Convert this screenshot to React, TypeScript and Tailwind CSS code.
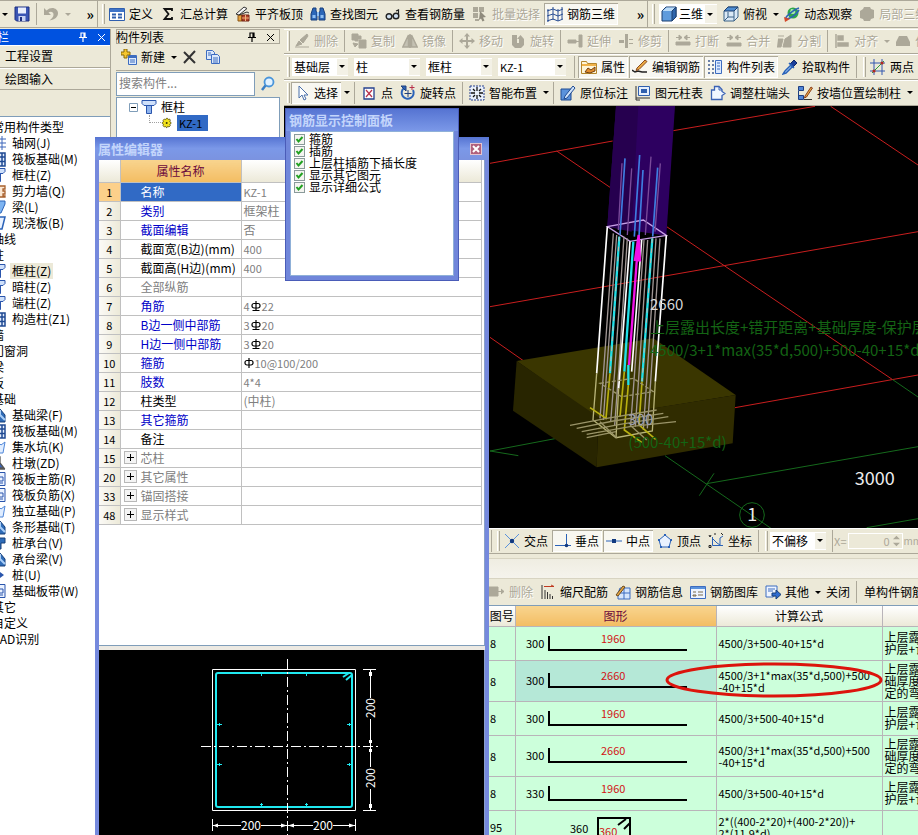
import React, { useState } from 'react';
import clsx from 'clsx';

// 16x16 icon drawings
const icons: Record<string, React.ReactNode> = {
  save: (
    <>
      <path d="M1 1h14v14H2.500L1 13.500z" fill="#3a55b4" stroke="#1d2f80" />
      <path d="M4 1.500h8v6H4z" fill="#e9eefc" />
      <path d="M4.500 10h7v5h-7z" fill="#c9d3f2" />
      <path d="M6 11h2v4H6z" fill="#1d2f80" />
    </>
  ),
  undo: <path d="M1 2v7h7L5.500 6.500c2-1.500 5-1 5 2 0 2-1 3.500-4 6C12 13.500 15 11 15 7 15 2.500 8.500-.5 3.500 4.500z" fill="#aca899" />,
  define: (
    <>
      <path d="M.5 2.500h15v12H.5z" fill="#fff" stroke="#2f5fae" />
      <path d="M1 3h14v3H1z" fill="#3f74c8" />
      <path d="M3 8.500h4M3 11.500h4M9 8.500h4M9 11.500h4" stroke="#2f5fae" strokeWidth="2" />
    </>
  ),
  sigma: <path d="M12 5V3H4.500l4 5-4 5H12v-2" fill="none" stroke="#111" strokeWidth="1.800" />,
  slab: (
    <>
      <path d="M3 9h4v6H3z" fill="#e8a33a" stroke="#8a5514" />
      <path d="M7 9h7v6H7z" fill="#b6442c" stroke="#6e2312" />
      <path d="M7 12h7M10.500 9v6" stroke="#f1b37c" />
      <path d="M1 8l8-7 3 1.500L4 9z" fill="#f7f7f7" stroke="#333" />
      <path d="M4 9l8-3 2 1" fill="none" stroke="#333" />
    </>
  ),
  find: (
    <>
      <path d="M3 2h3v3l1 2v7H1V8zM10 2h3l2 6v6H9V7l1-2z" fill="#2c67b8" stroke="#163e7c" />
      <path d="M7 6h2v4H7zM2.500 9h3v3h-3zM10.500 9h3v3h-3z" fill="#8fc0f3" />
    </>
  ),
  glasses: (
    <>
      <circle cx="4" cy="10.500" r="2.800" fill="#cfe0f2" stroke="#222" strokeWidth="1.400" />
      <circle cx="11" cy="10" r="2.800" fill="#cfe0f2" stroke="#222" strokeWidth="1.400" />
      <path d="M6.500 10h2M13.500 9V4l-2.500 1" fill="none" stroke="#222" strokeWidth="1.200" />
    </>
  ),
  batch: (
    <>
      <path d="M1 1h5v5H1zM7 1h5v5H7zM1 7h5v5H1zM3 13h4v2H3z" fill="#aca899" />
      <path d="M8 5l6 6-3 .5 1.500 3-2 1-1.500-3L7 14z" fill="#8f8b7d" />
    </>
  ),
  rebar3d: <path d="M1 3v13M6 1v13M11 3v12M15 1v12M0 5l6-2 5 2 5-2M0 10l6-2 5 2 5-2M0 15l6-2 5 2 5-2" stroke="#2a4f94" fill="none" />,
  cube: (
    <>
      <path d="M1 5l4-4h10v10l-4 4H1z" fill="#5f9bdc" stroke="#1d3f6e" />
      <path d="M1.500 5l4-3.500h9L11 5z" fill="#bcdcf8" />
      <path d="M11 5l4-4v10l-4 4z" fill="#2f66ac" stroke="#1d3f6e" />
    </>
  ),
  cubeTop: (
    <>
      <path d="M1 5l4-4h10v10l-4 4H1z" fill="#dbe9f6" stroke="#3b6286" />
      <path d="M1 5l4-4h10l-4 4z" fill="#4f8ed2" stroke="#1d3f6e" />
      <path d="M11 5v10M5 6v5h6M5 11l-4 4" stroke="#3b6286" fill="none" />
    </>
  ),
  orbit: (
    <>
      <circle cx="9" cy="7" r="5.500" fill="#2ea54a" />
      <path d="M7 3c3 0 5 2 4 4S6 8 6 6z" fill="#a5e6a8" />
      <path d="M2 13C0 11 11 3 15 2M2 13c4 0 10-4 13-9" stroke="#2c63b7" fill="none" strokeWidth="1.600" />
      <path d="M0 11l6 2-5 3z" fill="#d3472a" />
    </>
  ),
  partial: <path d="M5 1h6l1 2 3 1v8l-3 1-1 2H5l-1-2-3-1V5l3-2z" fill="#aca899" />,
  del: <path d="M1 14h14M2 13l3-5 3 3zM6 7l7-6 1 2-5 7z" fill="#aca899" stroke="#aca899" />,
  copy: <path d="M1 1h6v2h3v3H7v2H4V7H1zM8 7h7v8H8zM2 10l5 1-3 3z" fill="#aca899" stroke="#aca899" />,
  mirror: <path d="M6.500 2v12H.8zM9.500 2v12h5.700z M8 1v14" fill="#c4c1b3" stroke="#aca899" strokeWidth="1.500" />,
  move: <path d="M8 0l3 3.500H9V7h3.500V5L16 8l-3.500 3V9H9v3.500h2L8 16l-3-3.500h2V9H3.500v2L0 8l3.500-3v2H7V3.500H5z" fill="#aca899" />,
  rotate: <path d="M2 2h5v8h2V6H7l3.500-4L14 6v6l-3 3H5l-3-3z" fill="#aca899" />,
  extend: <path d="M1 7h8v3H1zM12 2h3v12h-3zM9 8.500h3" fill="#aca899" stroke="#aca899" />,
  trim: <path d="M1 7h5v3H1zM7 1h3v14H7zM11 6h4v1h-4zM11 10h4v1h-4z" fill="#aca899" />,
  brk: <path d="M1 9h14v3H1zM1 4.500h5M10 4.500h5M4 2l3 2.500L4 7zM12 2L9 4.500 12 7z" fill="#aca899" stroke="#aca899" />,
  merge: <path d="M1 10h14v3H1zM1 4.500h5M10 4.500h5M4 2l3 2.500L4 7zM12 2L9 4.500 12 7z" fill="#aca899" stroke="#aca899" />,
  split: <path d="M1 6h5L4 14H0M8 6l6-4v12H6zM1 3h6" fill="#aca899" stroke="#aca899" />,
  align: <path d="M2 1v14M4 3h5v4H4zM4 10h10v3H4z" fill="#aca899" stroke="#aca899" strokeWidth="1.500" />,
  offset: <path d="M4 3h8l3 6v4H1V9z" fill="#aca899" />,
  props: (
    <>
      <path d="M.5 2.500h5l1 2h9v10H.5z" fill="#fff6d8" stroke="#b4862c" />
      <path d="M1 5h14v2H1z" fill="#f0b24a" />
      <path d="M4 13l3-4 3 2 4-3v4l-5 2z" fill="#e48f30" stroke="#703f10" />
    </>
  ),
  editRebar: (
    <>
      <path d="M0 11l3 2 3-1 4 1h5" stroke="#222" fill="none" strokeWidth="1.500" />
      <path d="M5 9l8-8 2 1.500-8 8-3 1z" fill="#e9a942" stroke="#8b4b1f" />
    </>
  ),
  list: (
    <>
      <path d="M1 2h2M5 2h2M1 6h2M5 6h2M1 10h2M5 10h2M1 14h2M5 14h2" stroke="#3d5a90" strokeWidth="1.500" />
      <path d="M8.500 1.500h6v13h-6z" fill="#dbe9ff" stroke="#3d6cc0" />
      <path d="M10 4h3M10 7h3M10 10h3" stroke="#3d6cc0" />
    </>
  ),
  pick: (
    <>
      <path d="M8 5l4-4 3 3-4 4z" fill="#1c3f9a" stroke="#102868" />
      <path d="M7 4l5 5M9 6l-6 6-2 3 3-1 6-6z" fill="#bfe0ff" stroke="#2a62b8" strokeWidth="1.500" />
    </>
  ),
  twoPoint: (
    <>
      <path d="M0 4h15M0 12h15M4 0v16M12 0v16" stroke="#3458b0" />
      <path d="M2 14L14 2" stroke="#2d9b3a" />
      <circle cx="4" cy="12" r="1.600" fill="#b02a1c" />
      <circle cx="12" cy="4" r="1.600" fill="#b02a1c" />
    </>
  ),
  parallel: <path d="M0 4h16M0 8h16M0 12h16M4 0v16" stroke="#a0306a" />,
  pointer: <path d="M5 1v12l3-3 2 5 2-1-2-4h4z" fill="#fff" stroke="#4b70ab" />,
  point: (
    <>
      <path d="M3 3h10v11H3z" fill="#fff" stroke="#26418f" strokeWidth="1.300" />
      <path d="M5 5l6 7M11 5l-6 7" stroke="#b8304a" strokeWidth="1.200" />
    </>
  ),
  rotPoint: (
    <>
      <path d="M4 3a6 6 0 1 0 9 2" fill="none" stroke="#2a62b8" strokeWidth="2" />
      <path d="M1 1h5v5zM8 5v7M4.500 8.500h7" fill="#2a62b8" stroke="#20407c" />
      <path d="M12 0v5M9.500 2.500h5" stroke="#b8304a" />
    </>
  ),
  smart: (
    <>
      <path d="M1 1h14v14H1z" fill="#e9f0fb" stroke="#26418f" strokeDasharray="2 1" />
      <path d="M8 2v4M8 10v4M2 8h4M10 8h4M4 4l2 2M12 4l-2 2M4 12l2-2M12 12l-2-2" stroke="#111" strokeWidth="1.300" />
    </>
  ),
  annotate: (
    <>
      <path d="M1 4h10v11H1z" fill="#5a92dc" stroke="#1f4a92" />
      <path d="M5 11l8-10 2 2-8 10-3 1z" fill="#cfe3fb" stroke="#1f4a92" />
    </>
  ),
  colTable: (
    <>
      <path d="M3.500 1.500h11v9h-11z" fill="#e6effd" stroke="#2f5fae" />
      <path d="M6 4h6v4H6z" fill="#2f5fae" />
      <path d="M1 1v14h4M1 13h14" stroke="#333" fill="none" />
    </>
  ),
  colHead: (
    <>
      <path d="M1.500 5h3V1.500H9l3 3v2l3 2-3 2v4H1.500z" fill="#f0f6ff" stroke="#3a62b4" strokeWidth="1.300" />
      <path d="M9 2v3h3" fill="none" stroke="#3a62b4" />
    </>
  ),
  wallCol: (
    <>
      <path d="M1.500 1.500h5v4h-5zM1.500 6v8M1.500 10.500h5v4h-5z" fill="#4f86d8" stroke="#1f3f82" />
      <path d="M8 11l6-9 1.500 1-6 9-2 1z" fill="#e9a942" stroke="#8b3f1f" />
      <path d="M7 14.500h8" stroke="#333" />
    </>
  ),
  newItem: (
    <>
      <path d="M7.500 6.500h8v9h-8z" fill="#dce9fb" stroke="#3d6cc0" />
      <path d="M8 7h7v2H8z" fill="#3d6cc0" />
      <path d="M9 11h5M9 13h5" stroke="#3d6cc0" />
      <path d="M3 0h3v3h3v3H6v3H3V6H0V3h3z" fill="#f6c62f" stroke="#8a6a08" />
    </>
  ),
  cross: <path d="M2 3l11 11M13 2L2 14" stroke="#333" strokeWidth="2" />,
  copyDoc: (
    <>
      <path d="M1.500 1.500h6l2 2v7h-8z" fill="#dce9fb" stroke="#3d6cc0" />
      <path d="M6.500 5.500h6l2 2v7h-8z" fill="#dce9fb" stroke="#3d6cc0" />
      <path d="M8 9h5M8 11h5M8 13h5M3 4h3M3 6h3" stroke="#3d6cc0" />
    </>
  ),
  search: (
    <>
      <circle cx="9" cy="6" r="4.500" fill="#e2f2ff" stroke="#4a95da" strokeWidth="1.800" />
      <path d="M5.500 9.500L2 14" stroke="#3a7ec4" strokeWidth="2.500" />
    </>
  ),
  column: (
    <>
      <path d="M1 1.500h14v3l-2 2H3l-2-2z" fill="#cfe0fa" stroke="#2a55ac" />
      <path d="M5.500 6.500h5v8h-5z" fill="#8fb4ee" stroke="#2a55ac" />
    </>
  ),
  gear: (
    <>
      <path d="M7 2h2l1 2 2-1 1 2-1 2 2 1v2l-2 1 1 2-2 2-2-1-1 2H7l-1-2-2 1-2-2 1-2-2-1V8l2-1-1-2 2-2 2 1z" fill="#f2e21c" stroke="#3c3600" />
      <circle cx="7.500" cy="9" r="1.500" fill="#3c3600" />
    </>
  ),
  grid: <path d="M0 4h16M0 8h16M0 12h16M4 1v14M8 1v14M12 1v14" stroke="#3c66ba" />,
  raft: (
    <>
      <path d="M0 2h15v13H0z" fill="#e4eefc" stroke="#1f4a92" strokeWidth="1.500" />
      <path d="M0 6h15M0 10.500h15M5 2v13M8 2v13M12 2v13" stroke="#1f4a92" strokeWidth="1.500" />
    </>
  ),
  wall: <path d="M1 3h14v3h-2v2h2v3h-2v2h2v1H1z" fill="#fbe8d4" stroke="#a8602c" strokeWidth="1.300" />,
  beam: <path d="M3 6l4-4h8v3l-4 9H6l3-7H3z" fill="#7db4f2" stroke="#2a62b8" />,
  plate: <path d="M4 2h11l-3 12H1z" fill="#eaf2ff" stroke="#2a62b8" strokeWidth="1.500" />,
  foundation: (
    <>
      <path d="M1 2h9l5 6v7H1z" fill="#2f6cb8" stroke="#173f78" />
      <path d="M10 3v5l5 5" fill="none" stroke="#a9cdf6" strokeWidth="2" />
    </>
  ),
  pit: <path d="M1 3l4 3 3-3 3 3 4-3-2 11H4z" fill="#e0edff" stroke="#4f86d8" />,
  pier: <path d="M7 2h3v6l4 5H4l3-5zM1 14h14" fill="#3c66ba" stroke="#555" strokeWidth="1.300" />,
  bars: (
    <>
      <path d="M0 1.500h15v13H0z" fill="#eaf2ff" stroke="#2a55ac" />
      <path d="M9 6h4v4H6M6 12h7" stroke="#2a55ac" fill="none" />
    </>
  ),
  pile: <path d="M10 2v3l4 3-4 3v4L6 8z" fill="#2a55ac" />,
  cap: <path d="M1 3h14v5h-4v6H6V8H1z" fill="#2f6cb8" stroke="#173f78" />,
  interX: (
    <>
      <path d="M1 1l14 14M15 1L1 15" stroke="#5a92dc" />
      <circle cx="8" cy="8" r="2.200" fill="#123a80" />
    </>
  ),
  perp: (
    <>
      <path d="M0 12.500h16M11.500 1v11" stroke="#2a62b8" />
      <circle cx="11.500" cy="12.500" r="1.800" fill="#123a80" />
    </>
  ),
  mid: (
    <>
      <path d="M0 8h16" stroke="#2a62b8" />
      <path d="M6 6h4v4H6z" fill="#123a80" />
    </>
  ),
  vertex: (
    <>
      <path d="M8 2l6 5-2 7H4L2 7z" fill="#e9f2ff" stroke="#2a62b8" />
      <path d="M7 1h2v2H7zM1 6h2v2H1zM13 6h2v2h-2zM3 13h2v2H3zM11 13h2v2h-2z" fill="#2a62b8" />
    </>
  ),
  coord: (
    <>
      <path d="M4.500 4v8.500H15M5 6l4 4 3 2V5l3-2" stroke="#2a62b8" fill="none" />
      <path d="M1 2l1 2 1-2M1 12.500h2v2H1zM6 1h2M13 0l2 2" stroke="#222" fill="none" />
    </>
  ),
  rowDel: <path d="M0 3h9v9H0zM9 7.500h6M12 5l3 2.500L12 10" fill="#aca899" stroke="#aca899" />,
  scaleBar: (
    <>
      <path d="M4 2.500h10M11 1l3 1.500" stroke="#c03a20" fill="none" />
      <path d="M2 1v14M5 6v9M7.500 8v7M10 10v5M12.500 12v3" stroke="#333" />
    </>
  ),
  rebarInfo: (
    <>
      <path d="M5 4h10v11H3V9z" fill="#d6e6fb" stroke="#3d6cc0" />
      <path d="M9 4v11M4 9h11" stroke="#3d6cc0" />
      <path d="M1 11l7-9 2 1-7 9z" fill="#e9a942" stroke="#6b4b1f" />
    </>
  ),
  rebarLib: (
    <>
      <path d="M.5 2.500h15v12H.5z" fill="#eef4ff" stroke="#3d6cc0" />
      <path d="M1 3h14v2H1z" fill="#5a92dc" />
      <path d="M3 8h3M8 8h5M3 11h3v1H3zM8 11h5" stroke="#7a6a4a" fill="none" />
    </>
  ),
  other: (
    <>
      <path d="M1 2h11v8l-4 3H1z" fill="#eef4ff" stroke="#3d6cc0" />
      <path d="M3 5h7M3 7h5" stroke="#3d6cc0" />
      <path d="M7 9h4V6l5 4.500L11 15v-3H7z" fill="#2f6cd0" stroke="#173f78" />
    </>
  ),
};

const Icon = ({ name }: { name: string }) => (
  <svg viewBox="0 0 16 16" className="h-4 w-4 shrink-0" aria-hidden="true">
    {icons[name]}
  </svg>
);

interface ToolProps {
  icon?: string;
  label?: string;
  pressed?: boolean;
  disabled?: boolean;
}

const Tool: React.FC<ToolProps> = ({ icon, label, pressed, disabled }) => (
  <button
    type="button"
    disabled={disabled}
    className={clsx(
      'flex h-[22px] shrink-0 items-center gap-1 px-[3px] whitespace-nowrap',
      pressed && 'bg-[#f8f7f1] shadow-[inset_1px_1px_0_#aca899,inset_-1px_-1px_0_#ffffff]',
      disabled && 'text-[#aca899] [text-shadow:1px_1px_0_#ffffff]'
    )}
  >
    {icon && <Icon name={icon} />}
    {label}
  </button>
);

const Caret = ({ muted }: { muted?: boolean }) => (
  <svg viewBox="0 0 9 5" className="h-[5px] w-[9px] shrink-0" aria-hidden="true">
    <path d="M2 1h6L5 4z" fill={muted ? '#aca899' : '#000'} />
  </svg>
);

const Sep = () => <span className="mx-0.5 h-[22px] w-px shrink-0 bg-[#aca899]" />;

const Grip = () => (
  <span className="ml-[3px] h-5 w-[3px] shrink-0 border-r border-l border-r-[#aca899] border-l-white" />
);

const Combo = ({ label, options, className }: { label: string; options: string[]; className: string }) => (
  <span className={clsx('mr-[5px] flex h-[18px] shrink-0 items-center bg-white', className)}>
    <select aria-label={label} className="h-full min-w-0 flex-1 appearance-none bg-white pl-0.5 outline-none">
      {options.map(o => (
        <option key={o}>{o}</option>
      ))}
    </select>
    <span className="pointer-events-none flex h-4 w-[11px] items-center bg-[#f3f1e6]">
      <Caret />
    </span>
  </span>
);

const rowClass = 'flex shrink-0 items-center gap-px overflow-hidden border-b border-[#aca899] shadow-[inset_0_1px_0_#ffffff]';

const TopBar = () => (
  <div className="flex h-[28px] shrink-0 items-center gap-px overflow-hidden border-t border-b border-[#aca899]">
    <Caret />
    <span className="w-px" />
    <Tool icon="save" />
    <Sep />
    <Tool icon="undo" disabled />
    <Caret muted />
    <span className="w-[21px] shrink-0 text-right text-sm font-bold leading-3">»</span>
    <span className="ml-0.5 h-[26px] w-px shrink-0 bg-[#aca899]" />
    <Grip />
    <Tool icon="define" label="定义" />
    <Tool icon="sigma" label="汇总计算" />
    <Tool icon="slab" label="平齐板顶" />
    <Tool icon="find" label="查找图元" />
    <Tool icon="glasses" label="查看钢筋量" />
    <Tool icon="batch" label="批量选择" disabled />
    <Tool icon="rebar3d" label="钢筋三维" pressed />
    <span className="w-[25px] shrink-0 text-right text-sm font-bold leading-3">»</span>
    <span className="ml-0.5 h-[26px] w-px shrink-0 bg-[#aca899]" />
    <Grip />
    <button type="button" className="mr-0.5 ml-[3px] flex h-5 w-[58px] shrink-0 items-center gap-0.5 bg-white pl-0.5">
      <Icon name="cube" />
      三维
      <span className="flex h-[18px] w-3 items-center bg-[#f3f1e6]">
        <Caret />
      </span>
    </button>
    <Tool icon="cubeTop" label="俯视" />
    <Caret />
    <Tool icon="orbit" label="动态观察" />
    <Tool icon="partial" label="局部三维" disabled />
  </div>
);

const navItems: { text: string; icon?: string; active?: boolean }[] = [
  { text: '常用构件类型' },
  { text: '轴网(J)', icon: 'grid' },
  { text: '筏板基础(M)', icon: 'raft' },
  { text: '框柱(Z)', icon: 'column' },
  { text: '剪力墙(Q)', icon: 'wall' },
  { text: '梁(L)', icon: 'beam' },
  { text: '现浇板(B)', icon: 'plate' },
  { text: '轴线' },
  { text: '柱' },
  { text: '框柱(Z)', icon: 'column', active: true },
  { text: '暗柱(Z)', icon: 'column' },
  { text: '端柱(Z)', icon: 'column' },
  { text: '构造柱(Z1)', icon: 'raft' },
  { text: '墙' },
  { text: '门窗洞' },
  { text: '梁' },
  { text: '板' },
  { text: '基础' },
  { text: '基础梁(F)', icon: 'foundation' },
  { text: '筏板基础(M)', icon: 'raft' },
  { text: '集水坑(K)', icon: 'pit' },
  { text: '柱墩(ZD)', icon: 'pier' },
  { text: '筏板主筋(R)', icon: 'bars' },
  { text: '筏板负筋(X)', icon: 'bars' },
  { text: '独立基础(P)', icon: 'pit' },
  { text: '条形基础(T)', icon: 'foundation' },
  { text: '桩承台(V)', icon: 'cap' },
  { text: '承台梁(V)', icon: 'foundation' },
  { text: '桩(U)', icon: 'pile' },
  { text: '基础板带(W)', icon: 'bars' },
  { text: '其它' },
  { text: '自定义' },
  { text: 'CAD识别' },
];

const PinClose = () => (
  <>
    <svg viewBox="0 0 10 10" className="h-[10px] w-[10px]" aria-hidden="true">
      <path d="M3 1h4v4.500H3zM6 1v5M1 5.500h8M5 6v4" fill="none" stroke="currentColor" strokeWidth="1.200" />
    </svg>
    <svg viewBox="0 0 10 10" className="h-[10px] w-[10px]" aria-hidden="true">
      <path d="M2 2l7 7M9 2L2 9" stroke="currentColor" />
    </svg>
  </>
);

const Sidebar = () => (
  <aside className="flex w-[111px] shrink-0 flex-col overflow-hidden border-r border-[#aca899]">
    <div className="flex h-4 shrink-0 items-center gap-2 bg-[#0052e0] pr-1 text-white">
      <span className="-ml-[3px] flex-1">栏</span>
      <PinClose />
    </div>
    <button type="button" className="h-[23px] shrink-0 border-b border-[#aca899] pl-[5px] text-left shadow-[inset_0_1px_0_#ffffff]">
      工程设置
    </button>
    <button type="button" className="h-[22px] shrink-0 border-b border-[#aca899] pl-[5px] text-left shadow-[inset_0_1px_0_#ffffff]">
      绘图输入
    </button>
    <div className="h-[27px] shrink-0 border-b border-[#7f9db9]" />
    <ul className="flex-1 bg-white pt-0.5">
      {navItems.map((n, i) => (
        <li key={i} className="-ml-[10px] flex h-4 items-center whitespace-nowrap">
          {n.icon ? (
            <>
              <Icon name={n.icon} />
              <span className={clsx('ml-1 px-0.5', n.active && 'bg-[#ece9d8]')}>{n.text}</span>
            </>
          ) : (
            <span className="pl-0.5">{n.text}</span>
          )}
        </li>
      ))}
    </ul>
  </aside>
);

const ComponentList = () => (
  <section className="ml-[5px] flex w-[164px] shrink-0 flex-col">
    <div className="flex h-[15px] shrink-0 items-center gap-2 border border-[#aca899] pr-1">
      <span className="-ml-px flex-1 leading-3">构件列表</span>
      <PinClose />
    </div>
    <div className="flex h-[27px] shrink-0 items-center gap-px border-b border-[#aca899] pl-0.5">
      <Tool icon="newItem" label="新建" />
      <Caret />
      <Tool icon="cross" />
      <Tool icon="copyDoc" />
    </div>
    <div className="flex h-[26px] shrink-0 items-center gap-0.5">
      <input
        aria-label="搜索构件"
        placeholder="搜索构件..."
        className="h-6 w-[139px] border border-[#7f9db9] bg-white px-0.5 pb-1 text-xs outline-none placeholder:text-[#808080]"
      />
      <Tool icon="search" />
    </div>
    <div className="flex-1 border border-[#7f9db9] bg-white pt-px">
      <div className="flex h-4 items-center pl-3">
        <svg viewBox="0 0 9 9" className="mr-[3px] h-[9px] w-[9px]" aria-hidden="true">
          <path d="M.5.5h8v8h-8z" fill="#fff" stroke="#7f9db9" />
          <path d="M2 4.500h5" stroke="#000" />
        </svg>
        <Icon name="column" />
        <span className="ml-1">框柱</span>
      </div>
      <div className="flex h-4 items-center pl-8">
        <span className="-mt-2 h-2 w-3 border-b border-l border-dotted border-[#a0a0a0]" />
        <svg viewBox="0 0 16 18" className="h-3 w-3" aria-hidden="true">
          {icons.gear}
        </svg>
        <span className="ml-1 bg-[#316ac5] pr-1.5 pl-0.5 text-[11px] leading-4 text-black">KZ-1</span>
      </div>
    </div>
  </section>
);

const EditBar = () => (
  <div className={clsx(rowClass, 'h-[25px]')}>
    <Grip />
    <Tool icon="del" label="删除" disabled />
    <Sep />
    <Tool icon="copy" label="复制" disabled />
    <Tool icon="mirror" label="镜像" disabled />
    <Sep />
    <Tool icon="move" label="移动" disabled />
    <Tool icon="rotate" label="旋转" disabled />
    <Sep />
    <Tool icon="extend" label="延伸" disabled />
    <Tool icon="trim" label="修剪" disabled />
    <Sep />
    <Tool icon="brk" label="打断" disabled />
    <Tool icon="merge" label="合并" disabled />
    <Tool icon="split" label="分割" disabled />
    <Sep />
    <Tool icon="align" label="对齐" disabled />
    <Caret muted />
    <Tool icon="offset" label="偏移" disabled />
  </div>
);

const PickBar = () => (
  <div className={clsx(rowClass, 'h-[26px]')}>
    <Grip />
    <span className="w-px" />
    <Combo label="楼层" options={['基础层', '首层']} className="w-[56px]" />
    <Combo label="构件大类" options={['柱', '梁']} className="w-[66px]" />
    <Combo label="构件类型" options={['框柱', '暗柱']} className="w-[66px]" />
    <Combo label="构件名称" options={['KZ-1']} className="w-[68px] text-[11px]" />
    <Sep />
    <Tool icon="props" label="属性" pressed />
    <Tool icon="editRebar" label="编辑钢筋" pressed />
    <Tool icon="list" label="构件列表" pressed />
    <Tool icon="pick" label="拾取构件" />
    <Sep />
    <Grip />
    <Tool icon="twoPoint" label="两点" />
    <Tool icon="parallel" label="平行" />
  </div>
);

const DrawBar = () => (
  <div className={clsx(rowClass, 'h-[26px]')}>
    <Grip />
    <Tool icon="pointer" label="选择" pressed />
    <Caret />
    <Sep />
    <Tool icon="point" label="点" />
    <Tool icon="rotPoint" label="旋转点" />
    <Sep />
    <Tool icon="smart" label="智能布置" />
    <Caret />
    <Sep />
    <Tool icon="annotate" label="原位标注" />
    <Tool icon="colTable" label="图元柱表" />
    <Tool icon="colHead" label="调整柱端头" />
    <Tool icon="wallCol" label="按墙位置绘制柱" />
    <Caret />
  </div>
);

// 3D view of the column, its footing and the bars
const ModelView = () => (
  <svg viewBox="0 0 634 422" preserveAspectRatio="xMinYMin slice" className="block h-[422px] w-full shrink-0 bg-black">
    <svg x="206" y="-1" width="428" height="425" viewBox="0 0 1284 1275" fill="none">
      <g stroke="#c81e1e" strokeWidth="3">
        <path d="M0 175L368 108M550 77L975 4M1022 4L1284 180M200 138L360 247M0 605L1284 380M530 365L1208 824M0 697L100 767M735 908L1284 810" />
      </g>
      <g stroke="#15691c" strokeWidth="3">
        <path d="M0 1038L195 1001M0 1038L85 1052M525 1052L843 1270M650 1136L1284 1025M628 1172L672 1105M1208 824L1284 876M1130 1268L1284 1241" />
        <circle cx="786" cy="1230" r="37" />
      </g>
      <path d="M80 768L490 700L737 870L320 938z" fill="#3a3600" />
      <path d="M80 768L325 936L320 1087L69 917z" fill="#282500" />
      <path d="M325 936L737 870L728 1015L320 1087z" fill="#302c00" />
      <path d="M378 3H555L529 392L352 365z" fill="#2d0060" />
      <path d="M378 3H445L425 380L352 365z" fill="#26004f" />
      <path d="M352 365L460 345L529 391L420 409z" stroke="#c8a0e6" strokeWidth="4" />
      <g stroke="#7a4a9a" strokeWidth="4">
        <path d="M396 175L385 375M425 190L412 390M483 155L466 390M511 175L495 380" />
      </g>
      <g stroke="#3f7de0" strokeWidth="5">
        <path d="M405 160L390 390M449 150L433 395M459 195L447 395M503 188L488 395" />
      </g>
      <g stroke="#a09694" strokeWidth="4">
        <path d="M370 385L340 810L330 940M380 390L350 800L340 945M402 395L374 800L362 950M412 400L386 800L374 960M462 405L434 800L422 960M473 405L446 820L436 965M498 400L470 830L460 975M510 400L482 830L472 970" />
      </g>
      <path d="M352 365L320 805M420 409L386 850M455 405L425 800M529 391L496 830" stroke="#fff" strokeWidth="5" />
      <path d="M320 805L309 945L378 998L487 978L496 830M386 850L378 998" stroke="#b8b478" strokeWidth="4" />
      <path d="M388 395L360 805M430 410L403 800M487 400L456 830M415 780v60" stroke="#20e0e8" strokeWidth="7" />
      <path d="M388 395L360 805M487 400L456 830" stroke="#c8b8b0" strokeWidth="3" strokeDasharray="14 16" />
      <path d="M446 390L435 465L450 466zM446 390L417 780" fill="#ff10f0" stroke="#f010e8" strokeWidth="7" />
      <path d="M360 805L348 940L300 908M403 800L390 935M415 840L403 975L455 1012M456 830L447 960L497 1003" stroke="#b8b010" strokeWidth="5" />
      <g stroke="#9a9468" strokeWidth="4">
        <path d="M240 961L350 940L500 915M260 970L370 948L520 925M275 980L390 958L535 935M290 988L420 965L558 950M290 998L378 980M330 950L380 998M420 960L470 1005" />
        <path d="M330 835L430 820L490 860L395 875z" strokeDasharray="12 6" />
      </g>
      <g fontFamily='"Noto Sans CJK SC", sans-serif'>
        <text x="480" y="616" fontSize="45" fill="#d8d8d8">2660</text>
        <text x="415" y="960" fontSize="45" fill="#a0a0b0">300</text>
        <text x="1094" y="1139" fontSize="54" fill="#ececec">3000</text>
        <text x="772" y="1247" fontSize="54" fill="#ececec">1</text>
        <text x="480" y="685" fontSize="45" fill="#146414">上层露出长度+错开距离+基础厚度-保护层</text>
        <text x="480" y="752" fontSize="45" fill="#146414">4500/3+1*max(35*d,500)+500-40+15*d</text>
        <text x="415" y="1028" fontSize="45" fill="#146414">(500-40+15*d)</text>
      </g>
    </svg>
  </svg>
);

const SnapBar = () => (
  <div className={clsx(rowClass, 'h-[26px]')}>
    <span className="ml-0.5 h-[22px] w-px shrink-0 bg-[#aca899]" />
    <span className="w-[3px]" />
    <Grip />
    <Tool icon="interX" label="交点" />
    <Tool icon="perp" label="垂点" pressed />
    <Tool icon="mid" label="中点" pressed />
    <Tool icon="vertex" label="顶点" />
    <Tool icon="coord" label="坐标" />
    <Sep />
    <Grip />
    <span className="w-px" />
    <Combo label="偏移方式" options={['不偏移', '正交']} className="w-[56px]" />
    <span className="h-[22px] w-px shrink-0 bg-[#aca899]" />
    <label htmlFor="offset-x" className="text-[11px] text-[#aca899]">
      X=
    </label>
    <input
      id="offset-x"
      disabled
      value="0"
      readOnly
      className="h-4 w-[42px] shrink-0 border border-r-0 border-white bg-[#ece9d8] text-right text-[11px] text-[#aca899]"
    />
    <svg viewBox="0 0 13 16" className="-ml-px h-4 w-[13px] shrink-0 border border-l-0 border-white" aria-hidden="true">
      <path d="M3 6h8L7 2zM3 10h8l-4 4z" fill="#aca899" />
    </svg>
    <span className="text-[10px] text-[#aca899]">mm</span>
  </div>
);

const RebarBar = () => (
  <div className="flex h-[27px] shrink-0 items-center gap-px overflow-hidden border-b border-[#7f9db9]">
    <span className="-ml-1" />
    <Tool icon="rowDel" label="删除" disabled />
    <Tool icon="scaleBar" label="缩尺配筋" />
    <Tool icon="rebarInfo" label="钢筋信息" />
    <Tool icon="rebarLib" label="钢筋图库" />
    <Tool icon="other" label="其他" />
    <Caret />
    <Tool label="关闭" />
    <Sep />
    <span className="w-1" />
    <Tool label="单构件钢筋" />
  </div>
);

const longBase = ['上层露', '护层+计'];
const longMax = ['上层露', '础厚度', '定的弯'];

const rebarRows = [
  { no: '8', side: '300', len: '1960', formula: ['4500/3+500-40+15*d'], note: longBase },
  { no: '8', side: '300', len: '2660', formula: ['4500/3+1*max(35*d,500)+500', '-40+15*d'], note: longMax, selected: true },
  { no: '8', side: '300', len: '1960', formula: ['4500/3+500-40+15*d'], note: longBase },
  { no: '8', side: '300', len: '2660', formula: ['4500/3+1*max(35*d,500)+500', '-40+15*d'], note: longMax },
  { no: '8', side: '330', len: '1960', formula: ['4500/3+500-40+15*d'], note: longBase },
  { no: '95', side: '360', len: '360', formula: ['2*((400-2*20)+(400-2*20))+', '2*(11.9*d)'], note: [], stirrup: true },
];

const BarShape = ({ side, len, stirrup }: { side: string; len: string; stirrup?: boolean }) => (
  <svg viewBox="0 0 200 33" className="block h-[33px] w-[200px]" fontSize="11">
    {stirrup ? (
      <>
        <path d="M82 33V7h32v26M102 14l8-6M108 18l6-6" fill="none" stroke="#000" strokeWidth="2" />
        <text x="54" y="22">{side}</text>
        <text x="83" y="25" fill="#d21414">{len}</text>
      </>
    ) : (
      <>
        <path d="M33 9v14h138" fill="none" stroke="#000" strokeWidth="2" />
        <text x="10" y="21">{side}</text>
        <text x="85" y="16" fill="#d21414">{len}</text>
      </>
    )}
  </svg>
);

const RebarTable = () => (
  <div className="relative flex-1 overflow-hidden bg-[#ccffdb]">
    <table className="w-full table-fixed border-collapse">
      <colgroup>
        <col className="w-[26px]" />
        <col className="w-[201px]" />
        <col className="w-[166px]" />
        <col />
      </colgroup>
      <thead>
        <tr className="h-5 bg-linear-to-b from-white to-[#ece9d8]">
          <th className="border-r border-b border-[#b9b4b9] font-normal whitespace-nowrap">图号</th>
          <th className="border-r border-b border-[#b9b4b9] bg-linear-to-b from-[#f8d48e] to-[#f3bd62] font-normal text-[#6b0a3c]">图形</th>
          <th className="border-r border-b border-[#b9b4b9] font-normal">计算公式</th>
          <th className="border-b border-[#b9b4b9]" />
        </tr>
      </thead>
      <tbody>
        {rebarRows.map((r, i) => (
          <tr key={i} className={r.note.length > 2 ? 'h-[41px]' : 'h-[34px]'}>
            <td className="border-r border-b border-[#b9b4b9] pl-px text-[11px]">{r.no}</td>
            <td className={clsx('border-r border-b border-[#b9b4b9]', r.selected && 'bg-[#b5e8d7]')}>
              <BarShape side={r.side} len={r.len} stirrup={r.stirrup} />
            </td>
            <td className="border-r border-b border-[#b9b4b9] pl-0.5 text-[11px] leading-3 whitespace-nowrap">
              {r.formula.map(f => (
                <div key={f}>{f}</div>
              ))}
            </td>
            <td className="overflow-hidden border-b border-[#b9b4b9] pl-0.5 leading-3 whitespace-nowrap">
              {r.note.map(n => (
                <div key={n}>{n}</div>
              ))}
            </td>
          </tr>
        ))}
      </tbody>
    </table>
    {/* hand-drawn mark round the formula */}
    <svg viewBox="0 0 218 38" className="pointer-events-none absolute top-[55px] left-[176px] h-[38px] w-[218px]" aria-hidden="true">
      <ellipse cx="109" cy="19" rx="107" ry="16" fill="none" stroke="#dc140c" strokeWidth="3" />
    </svg>
  </div>
);

type Prop = { no: number; name: string; value?: string; bar?: string; ribbed?: boolean; tone?: 'blue' | 'gray'; group?: boolean };

const props: Prop[] = [
  { no: 1, name: '名称', value: 'KZ-1' },
  { no: 2, name: '类别', value: '框架柱', tone: 'blue' },
  { no: 3, name: '截面编辑', value: '否', tone: 'blue' },
  { no: 4, name: '截面宽(B边)(mm)', value: '400' },
  { no: 5, name: '截面高(H边)(mm)', value: '400' },
  { no: 6, name: '全部纵筋', tone: 'gray' },
  { no: 7, name: '角筋', value: '4', bar: '22', ribbed: true, tone: 'blue' },
  { no: 8, name: 'B边一侧中部筋', value: '3', bar: '20', ribbed: true, tone: 'blue' },
  { no: 9, name: 'H边一侧中部筋', value: '3', bar: '20', ribbed: true, tone: 'blue' },
  { no: 10, name: '箍筋', value: '', bar: '10@100/200', tone: 'blue' },
  { no: 11, name: '肢数', value: '4*4', tone: 'blue' },
  { no: 12, name: '柱类型', value: '(中柱)' },
  { no: 13, name: '其它箍筋', tone: 'blue' },
  { no: 14, name: '备注' },
  { no: 15, name: '芯柱', tone: 'gray', group: true },
  { no: 20, name: '其它属性', tone: 'gray', group: true },
  { no: 33, name: '锚固搭接', tone: 'gray', group: true },
  { no: 48, name: '显示样式', tone: 'gray', group: true },
];

const SectionView = () => (
  <svg viewBox="0 0 385 185" className="mx-auto block h-[185px] w-[385px]" fill="none">
    <path d="M113.500 19.500h143v141h-143z" stroke="#fff" />
    <rect x="117" y="23" width="136" height="134" rx="2" stroke="#20e8f0" strokeWidth="2" />
    <path d="M244 27l6-4M247 30l6-5" stroke="#20e8f0" strokeWidth="2" />
    <path d="M162.500 24v2M207.500 24v2M162.500 153v4M207.500 153v4M118 74.500h5M118 114.500h5M248 74.500h5M248 114.500h5M161 154.500h3M206 154.500h3M120.500 73v3M120.500 113v3M250.500 73v3M250.500 113v3" stroke="#20e8f0" />
    <path d="M188.500 9v176M102 96.500h177" stroke="#fff" strokeDasharray="10 3 2 3" />
    <path d="M264 19.500h13M264 160.500h13M271.500 20v28M271.500 69v48M271.500 139v21M113.500 169v12M256.500 169v12M114 175.500h28M162 175.500h52M234 175.500h22" stroke="#fff" />
    <path d="M270 22h3v4h-3zM270 90h3v3h-3zM270 99h3v3h-3zM270 154h3v4h-3zM114 175.500l5-2v4zM188 175.500l-6-2v4zM189 175.500l6-2v4zM256 175.500l-6-2v4z" fill="#fff" />
    <g fill="#fff" fontSize="12" textAnchor="middle">
      <text x="152" y="180">200</text>
      <text x="224" y="180">200</text>
      <text transform="translate(276 58) rotate(-90)">200</text>
      <text transform="translate(276 128) rotate(-90)">200</text>
    </g>
  </svg>
);

const PropertyEditor = () => (
  <section className="absolute top-[137px] bottom-0 left-[95px] flex w-[394px] flex-col border-x-4 border-[#7589dd] bg-white shadow-[inset_-1px_0_0_#8aa0c8]">
    <div className="-mx-1 flex h-[23px] shrink-0 items-center bg-linear-to-b from-[#5674d2] via-[#7b98e8] to-[#7b93e0] pr-[7px] pl-[3px]">
      <h2 className="flex-1 text-[13px] font-bold text-[#c3d5fb]">属性编辑器</h2>
      <button type="button" aria-label="关闭" className="grid h-3 w-3 place-items-center border border-[#e3c5d0] bg-[#b0607c]">
        <svg viewBox="0 0 8 8" className="h-2 w-2" aria-hidden="true">
          <path d="M1 1l6 6M7 1L1 7" stroke="#fff" strokeWidth="2" />
        </svg>
      </button>
    </div>
    <table className="mr-[3px] table-fixed border-collapse">
      <colgroup>
        <col className="w-[21px]" />
        <col className="w-[121px]" />
        <col />
      </colgroup>
      <thead>
        <tr className="h-[22px] bg-linear-to-b from-white to-[#ece9d8]">
          <th className="border-r border-b border-[#c0c0c0]" />
          <th className="border-r border-b border-[#c0c0c0] bg-linear-to-b from-[#f8d48e] to-[#f3bd62] font-normal text-[#6b0a3c]">属性名称</th>
          <th className="border-r border-b border-[#c0c0c0]" />
        </tr>
      </thead>
      <tbody>
        {props.map((p, i) => (
          <tr key={p.no} className="h-[19px]">
            <td
              className={clsx(
                'border-r border-b border-[#c0c0c0] text-center text-[11px]',
                i === 0 ? 'bg-[#fcd08a]' : 'bg-linear-to-r from-[#fbfaf6] to-[#ece9d8]'
              )}
            >
              {p.no}
            </td>
            <td
              className={clsx(
                'border-r border-b border-[#c0c0c0] whitespace-nowrap',
                i === 0 && 'bg-[#316ac5] text-white',
                p.tone === 'blue' && 'text-[#0000c8]',
                p.tone === 'gray' && 'text-[#808080]'
              )}
            >
              <span className="flex items-center">
                <span className="flex w-5 shrink-0 pl-[3px]">
                  {p.group && (
                    <button type="button" aria-label={`展开${p.name}`} className="grid h-[13px] w-[13px] place-items-center border border-[#b8b8b8] bg-[#f4f4f4]">
                      <svg viewBox="0 0 7 7" className="h-[7px] w-[7px]" aria-hidden="true">
                        <path d="M0 3.500h7M3.500 0v7" stroke="#000" />
                      </svg>
                    </button>
                  )}
                </span>
                {p.name}
              </span>
            </td>
            <td className="border-r border-b border-[#c0c0c0] pl-0.5 text-[#808080]">
              {p.bar ? (
                <span className="flex items-center gap-px text-[11px]">
                  {p.value}
                  <svg viewBox="0 0 10 10" className="h-[10px] w-[10px]" aria-hidden="true">
                    <path d="M5 0v10" stroke="#000" strokeWidth="1.200" />
                    <rect x="1" y="2.500" width="8" height="4.500" rx="2" fill="none" stroke="#000" strokeWidth="1.200" />
                    {p.ribbed && <path d="M1.500 9.500h7" stroke="#000" />}
                  </svg>
                  {p.bar}
                </span>
              ) : (
                <span className={/^[\w*-]+$/.test(p.value ?? '') ? 'text-[11px]' : ''}>{p.value}</span>
              )}
            </td>
          </tr>
        ))}
      </tbody>
    </table>
    <div className="flex-1" />
    <div className="h-[5px] shrink-0 border-t border-[#7f9db9] bg-[#ece9e2]" />
    <div className="mr-px bg-black">
      <SectionView />
    </div>
  </section>
);

const DisplayPanel = () => {
  const [checked, setChecked] = useState<Record<string, boolean>>({
    箍筋: true,
    插筋: true,
    上层柱插筋下插长度: true,
    显示其它图元: true,
    显示详细公式: true,
  });

  return (
    <section className="absolute top-[108px] left-[285px] h-[173px] w-[174px] border border-[#4a5cb8] bg-[#7086da] px-1 pb-1">
      <h2 className="-mx-1 flex h-[22px] items-center bg-linear-to-b from-[#5674d2] to-[#7b98e8] pl-[3px] text-[13px] font-bold text-[#c3d5fb]">
        钢筋显示控制面板
      </h2>
      <div className="h-[145px] border border-[#8fb0d8] bg-white pt-px pl-[3px] leading-3">
        {Object.keys(checked).map(k => (
          <label key={k} className="flex h-3 items-center gap-1">
            <span className="grid h-[11px] w-[11px]">
              <input
                type="checkbox"
                checked={checked[k]}
                onChange={() => setChecked(prev => ({ ...prev, [k]: !prev[k] }))}
                className="col-start-1 row-start-1 h-[11px] w-[11px] appearance-none border border-[#8a9a9a] bg-[#f4f4f0]"
              />
              {checked[k] && (
                <svg viewBox="0 0 11 11" className="pointer-events-none col-start-1 row-start-1" aria-hidden="true">
                  <path d="M2.500 5l2 2.500 4-4.500" fill="none" stroke="#21a121" strokeWidth="2" />
                </svg>
              )}
            </span>
            {k}
          </label>
        ))}
      </div>
    </section>
  );
};

export default function App() {
  return (
    <div className='relative flex h-screen flex-col overflow-hidden bg-[#ece9d8] font-["Noto_Sans_CJK_SC",sans-serif] text-xs leading-4 text-black'>
      <TopBar />
      <div className="flex min-h-0 flex-1 pt-px">
        <Sidebar />
        <ComponentList />
        <main className="ml-1 flex min-w-0 flex-1 flex-col">
          <EditBar />
          <PickBar />
          <DrawBar />
          <ModelView />
          <div className="flex min-h-0 flex-1 flex-col pl-[205px]">
            <SnapBar />
            <div className="flex h-[25px] shrink-0 flex-col border-b border-[#d8d4c2]">
              <div className="h-[5px] border-b border-[#d8d4c2]" />
              <div className="flex-1 bg-linear-to-b from-[#efede2] to-[#f5f3ec]" />
            </div>
            <RebarBar />
            <RebarTable />
          </div>
        </main>
      </div>
      <PropertyEditor />
      <DisplayPanel />
    </div>
  );
}
